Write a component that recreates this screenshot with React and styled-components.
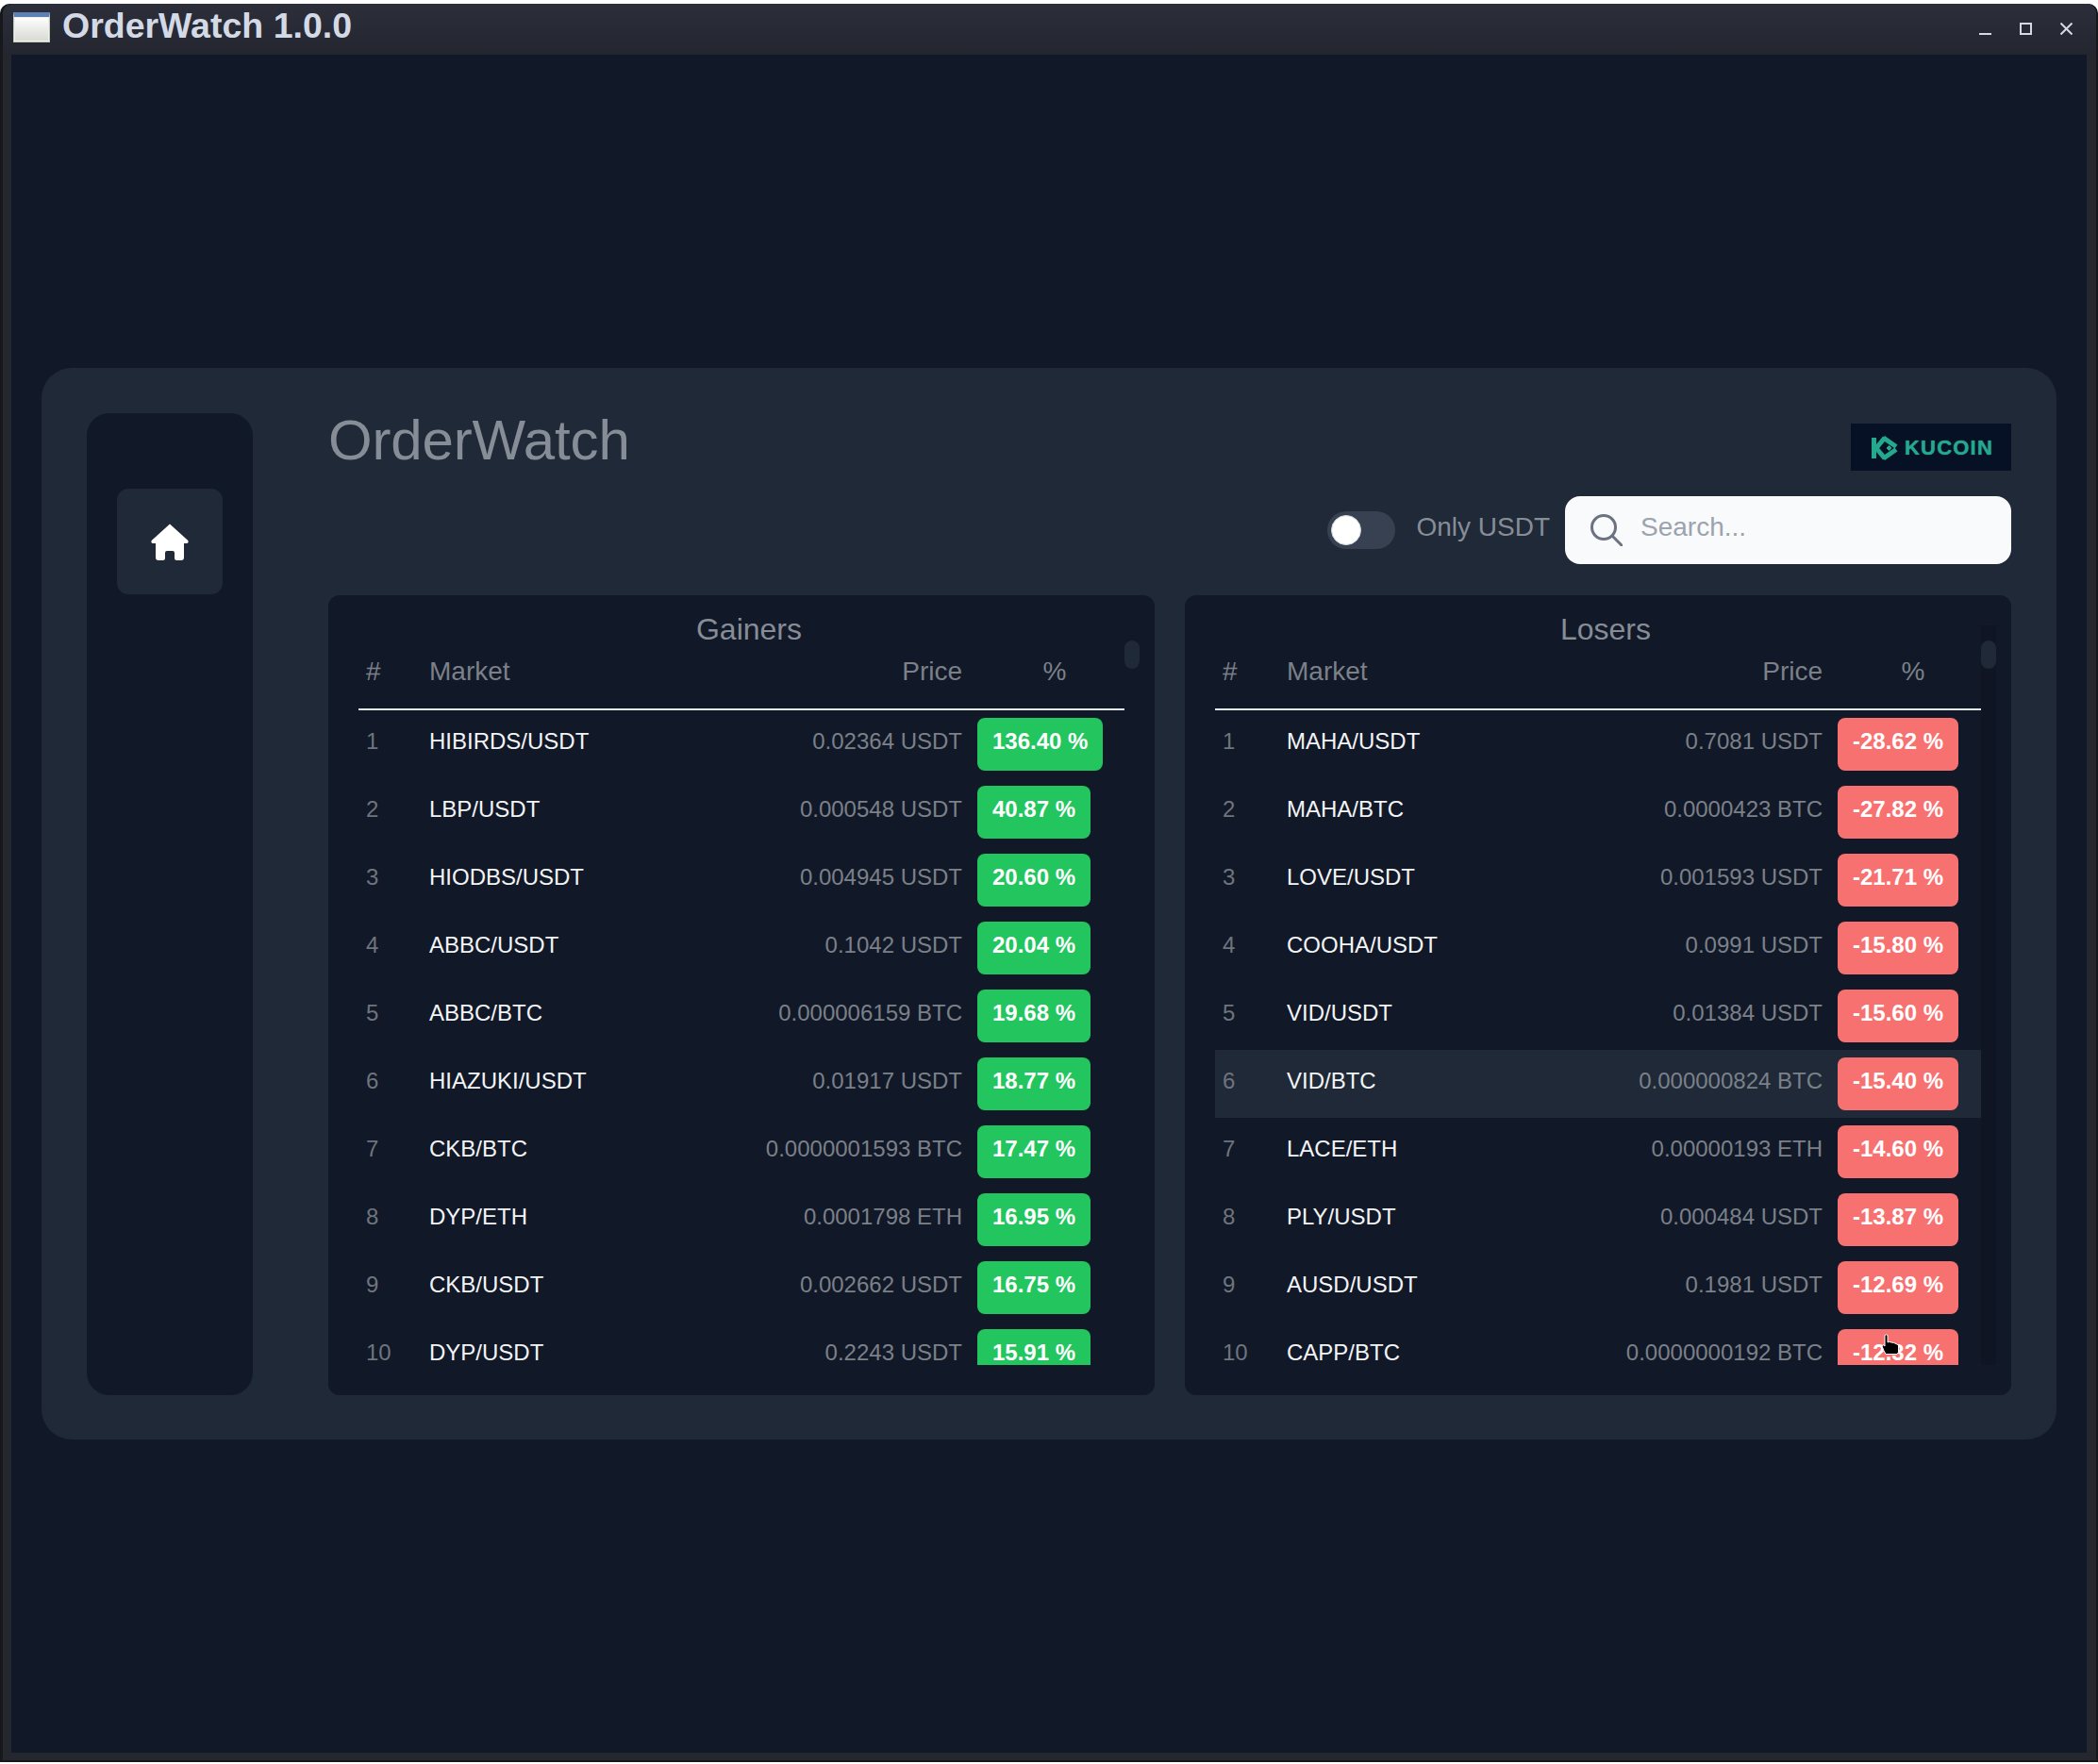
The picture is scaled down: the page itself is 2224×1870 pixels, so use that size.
import styled, { createGlobalStyle } from 'styled-components';

const FONT = '"Liberation Sans", Arial, sans-serif';

const GlobalStyle = createGlobalStyle`
  html, body {
    margin: 0;
    padding: 0;
    background: #ffffff;
  }
  * {
    box-sizing: border-box;
  }
`;

const gainers = [
  ['HIBIRDS/USDT', '0.02364 USDT', '136.40 %'],
  ['LBP/USDT', '0.000548 USDT', '40.87 %'],
  ['HIODBS/USDT', '0.004945 USDT', '20.60 %'],
  ['ABBC/USDT', '0.1042 USDT', '20.04 %'],
  ['ABBC/BTC', '0.000006159 BTC', '19.68 %'],
  ['HIAZUKI/USDT', '0.01917 USDT', '18.77 %'],
  ['CKB/BTC', '0.0000001593 BTC', '17.47 %'],
  ['DYP/ETH', '0.0001798 ETH', '16.95 %'],
  ['CKB/USDT', '0.002662 USDT', '16.75 %'],
  ['DYP/USDT', '0.2243 USDT', '15.91 %'],
];

const losers = [
  ['MAHA/USDT', '0.7081 USDT', '-28.62 %'],
  ['MAHA/BTC', '0.0000423 BTC', '-27.82 %'],
  ['LOVE/USDT', '0.001593 USDT', '-21.71 %'],
  ['COOHA/USDT', '0.0991 USDT', '-15.80 %'],
  ['VID/USDT', '0.01384 USDT', '-15.60 %'],
  ['VID/BTC', '0.000000824 BTC', '-15.40 %'],
  ['LACE/ETH', '0.00000193 ETH', '-14.60 %'],
  ['PLY/USDT', '0.000484 USDT', '-13.87 %'],
  ['AUSD/USDT', '0.1981 USDT', '-12.69 %'],
  ['CAPP/BTC', '0.0000000192 BTC', '-12.32 %'],
];

const Shell = styled.div`
  margin-top: 4px;
  height: 1864px;
  padding: 0 2px 2px 3px;
  background: #17181c;
  border-radius: 10px 10px 0 0;
  font-family: ${FONT};
`;

const Frame = styled.div`
  height: 100%;
  display: flex;
  flex-direction: column;
  background: #25272f;
  border-radius: 10px 10px 0 0;
`;

const TitleBar = styled.header`
  height: 54px;
  flex: none;
  display: flex;
  align-items: flex-start;
  padding: 9px 25px 0 11px;
  background: linear-gradient(#2c2e3a, #23252f);
  border-radius: 10px 10px 0 0;
`;

const WinIcon = styled.div`
  width: 39px;
  height: 32px;
  flex: none;
  border: 1px solid #c4c7bb;
  border-top: 5px solid #5d80b6;
  box-shadow: inset 0 0 0 1px #eef0ea;
  background: linear-gradient(#ffffff, #d7d9d2);
`;

const WinTitle = styled.h1`
  margin: -8px 0 0 13px;
  flex: 1;
  font-size: 37.5px;
  line-height: 44px;
  font-weight: 700;
  color: #d3dae6;
`;

const WinButtons = styled.div`
  display: flex;
  gap: 30px;
  margin-top: 11px;
`;

const WinGlyph = styled.svg`
  width: 13px;
  height: 13px;
  display: block;
  stroke: #d3dae6;
  fill: none;
  stroke-width: 2;
`;

const Content = styled.main`
  flex: 1;
  margin: 0 10px 8px 9px;
  padding: 0 32px;
  display: flex;
  align-items: center;
  background: #111827;
`;

const Card = styled.section`
  width: 100%;
  height: 1136px;
  padding: 48px 48px 47px;
  display: flex;
  gap: 80px;
  background: #1f2937;
  border-radius: 32px;
`;

const Sidebar = styled.nav`
  width: 176px;
  flex: none;
  padding: 80px 32px 0;
  background: #111827;
  border-radius: 24px;
`;

const NavButton = styled.button`
  width: 112px;
  height: 112px;
  display: flex;
  align-items: center;
  justify-content: center;
  padding: 0;
  border: 0;
  border-radius: 12px;
  background: #1f2937;
`;

const MainColumn = styled.div`
  flex: 1;
  min-width: 0;
  display: flex;
  flex-direction: column;
`;

const HeadRow = styled.div`
  height: 88px;
  flex: none;
  display: flex;
  justify-content: space-between;
  align-items: flex-start;
`;

const PageTitle = styled.h2`
  margin: -1px 0 0;
  font-size: 60px;
  line-height: 60px;
  font-weight: 400;
  letter-spacing: -0.15px;
  color: #878d96;
`;

const Logo = styled.div`
  width: 170px;
  height: 50px;
  margin-top: 11px;
  display: flex;
  align-items: center;
  gap: 7px;
  padding: 1px 0 0 22px;
  background: #061126;
`;

const LogoText = styled.span`
  font-size: 22px;
  line-height: 1;
  font-weight: 700;
  letter-spacing: 1.2px;
  color: #25a98e;
  text-shadow: 0 0 1px #25a98e;
`;

const Controls = styled.div`
  height: 72px;
  flex: none;
  margin-bottom: 33px;
  display: flex;
  justify-content: flex-end;
  align-items: center;
`;

const Toggle = styled.div`
  width: 72px;
  height: 40px;
  padding: 4px;
  border-radius: 20px;
  background: #374151;
`;

const Knob = styled.div`
  width: 32px;
  height: 32px;
  border-radius: 50%;
  background: #ffffff;
  border: 1px solid #d1d5db;
`;

const ToggleLabel = styled.span`
  margin: 0 16px 6px 22px;
  font-size: 28px;
  line-height: 32px;
  color: #878d96;
`;

const SearchBox = styled.label`
  width: 473px;
  height: 72px;
  display: flex;
  align-items: flex-start;
  gap: 19px;
  padding: 19px 16px 0 27px;
  border-radius: 16px;
  background: #f9fafb;
`;

const SearchInput = styled.input`
  flex: 1;
  min-width: 0;
  height: 32px;
  margin-top: -2px;
  padding: 0;
  border: 0;
  outline: 0;
  background: transparent;
  font-family: ${FONT};
  font-size: 28px;
  color: #111827;
  &::placeholder {
    color: #9ca3af;
    opacity: 1;
  }
`;

const Panels = styled.div`
  flex: 1;
  min-height: 0;
  display: grid;
  grid-template-columns: 1fr 1fr;
  gap: 32px;
`;

const Panel = styled.article`
  position: relative;
  min-height: 0;
  padding: 16px 32px 32px;
  display: flex;
  flex-direction: column;
  background: #111827;
  border-radius: 12px;
`;

const Track = styled.div`
  position: absolute;
  top: 32px;
  bottom: 32px;
  right: 16px;
  width: 16px;
  padding-top: 16px;
  background: ${p => (p.$visible ? '#0f1522' : 'transparent')};
`;

const Thumb = styled.div`
  height: 30px;
  border-radius: 8px;
  background: #1f2937;
`;

const PanelTitle = styled.h3`
  margin: 0;
  padding-left: 16px;
  flex: none;
  font-size: 32px;
  line-height: 40px;
  font-weight: 400;
  text-align: center;
  color: #878d96;
`;

const ScrollArea = styled.div`
  flex: 1;
  min-height: 0;
  overflow: hidden;
`;

const HeaderRow = styled.div`
  height: 66px;
  padding-top: 9px;
  display: grid;
  grid-template-columns: ${p => p.$rank}px 1fr auto ${p => p.$pct}px;
  border-bottom: 2px solid #e5e7eb;
  font-size: 28px;
  line-height: 32px;
  color: #7b8089;
`;

const Row = styled.div`
  height: 72px;
  display: grid;
  grid-template-columns: ${p => p.$rank}px 1fr auto ${p => p.$pct}px;
  background: ${p => (p.$active ? '#1f2937' : 'transparent')};
  font-size: 24px;
  line-height: 32px;
`;

const Cell = styled.div`
  padding: ${p => (p.$head ? '0 8px' : '17px 8px 0')};
  white-space: nowrap;
  text-align: ${p => (p.$right ? 'right' : 'left')};
  color: ${p => (p.$light ? '#f3f4f6' : '#7b8089')};
`;

const RankCell = styled(Cell)`
  color: #6f747d;
`;

const PctHead = styled.div`
  padding-left: 16px;
  text-align: center;
`;

const PctCell = styled.div`
  position: relative;
  padding: 8px 0 0 8px;
`;

const Badge = styled.span`
  display: inline-block;
  height: 56px;
  padding: 9px 16px 15px;
  border-radius: 8px;
  font-weight: 700;
  color: #ffffff;
  background: ${p => (p.$up ? '#22c55e' : '#f87171')};
`;

const Pointer = styled.svg`
  position: absolute;
  left: 54px;
  top: 13px;
  width: 20px;
  height: 22px;
`;

function HomeIcon() {
  return (
    <svg width="40" height="39" viewBox="0 0 40 39" fill="#fff">
      <path d="M20 .5 39.3 18Q40.4 21 38 21H35V36Q35 39 32 39H27.5Q25 39 25 36.5V31Q25 29 23 29H17Q15 29 15 31V36.5Q15 39 12.500 39H8Q5 39 5 36V21H2Q-.4 21 .7 18Z" />
    </svg>
  );
}

function SearchIcon() {
  return (
    <svg width="34" height="34" viewBox="0 0 34 34" fill="none" stroke="#6b7280" strokeWidth="3">
      <circle cx="14" cy="14" r="12.5" />
      <path d="M23 23 33 33" strokeLinecap="round" />
    </svg>
  );
}

function KucoinMark() {
  return (
    <svg width="28" height="28" viewBox="0 0 28 26" fill="none" stroke="#25a98e" strokeWidth="5" style={{ filter: 'blur(0.4px)' }}>
      <path d="M2.500 2V24" />
      <path d="M14 2 5 13 14 24" />
      <path d="M12.500 2 26 11.500" />
      <path d="M12.500 24 26 14.500" />
      <path d="M18.500 10.500 21 13 18.500 15.500 16 13Z" fill="#25a98e" strokeWidth="1" />
    </svg>
  );
}

function HandCursor() {
  return (
    <Pointer viewBox="0 0 20 22">
      <path
        d="M4 1.500Q5.500 0 7 1.500V9L8.500 8.500 11 9 13.500 9.500 16 10.500 18.500 12V19.500L17 21.500H5L3 18 1 13 2 11.500 4 13Z"
        fill="#000"
        stroke="#fff"
        strokeWidth="1"
      />
    </Pointer>
  );
}

function MoverPanel({ title, rows, up, rank, pct, activeRow, showTrack, pointerRow }) {
  return (
    <Panel>
      <Track $visible={showTrack}>
        <Thumb />
      </Track>
      <PanelTitle>{title}</PanelTitle>
      <ScrollArea>
        <HeaderRow $rank={rank} $pct={pct}>
          <Cell $head>#</Cell>
          <Cell $head>Market</Cell>
          <Cell $head $right>Price</Cell>
          <PctHead>%</PctHead>
        </HeaderRow>
        {rows.map((row, i) => (
          <Row key={row[0]} $rank={rank} $pct={pct} $active={i === activeRow}>
            <RankCell>{i + 1}</RankCell>
            <Cell $light>{row[0]}</Cell>
            <Cell $right>{row[1]}</Cell>
            <PctCell>
              <Badge $up={up}>{row[2]}</Badge>
              {i === pointerRow && <HandCursor />}
            </PctCell>
          </Row>
        ))}
      </ScrollArea>
    </Panel>
  );
}

export default function App() {
  return (
    <>
      <GlobalStyle />
      <Shell>
        <Frame>
          <TitleBar>
            <WinIcon />
            <WinTitle>OrderWatch 1.0.0</WinTitle>
            <WinButtons>
              <WinGlyph viewBox="0 0 13 13">
                <path d="M0 12H13" />
              </WinGlyph>
              <WinGlyph viewBox="0 0 13 13">
                <rect x="1" y="1" width="11" height="11" />
              </WinGlyph>
              <WinGlyph viewBox="0 0 13 13">
                <path d="M.5 .5 12.500 12.500M12.500 .5 .5 12.500" />
              </WinGlyph>
            </WinButtons>
          </TitleBar>
          <Content>
            <Card>
              <Sidebar>
                <NavButton>
                  <HomeIcon />
                </NavButton>
              </Sidebar>
              <MainColumn>
                <HeadRow>
                  <PageTitle>OrderWatch</PageTitle>
                  <Logo>
                    <KucoinMark />
                    <LogoText>KUCOIN</LogoText>
                  </Logo>
                </HeadRow>
                <Controls>
                  <Toggle>
                    <Knob />
                  </Toggle>
                  <ToggleLabel>Only USDT</ToggleLabel>
                  <SearchBox>
                    <SearchIcon />
                    <SearchInput placeholder="Search..." />
                  </SearchBox>
                </Controls>
                <Panels>
                  <MoverPanel title="Gainers" rows={gainers} up rank={67} pct={164} />
                  <MoverPanel title="Losers" rows={losers} rank={68} pct={160} activeRow={5} showTrack pointerRow={9} />
                </Panels>
              </MainColumn>
            </Card>
          </Content>
        </Frame>
      </Shell>
    </>
  );
}
